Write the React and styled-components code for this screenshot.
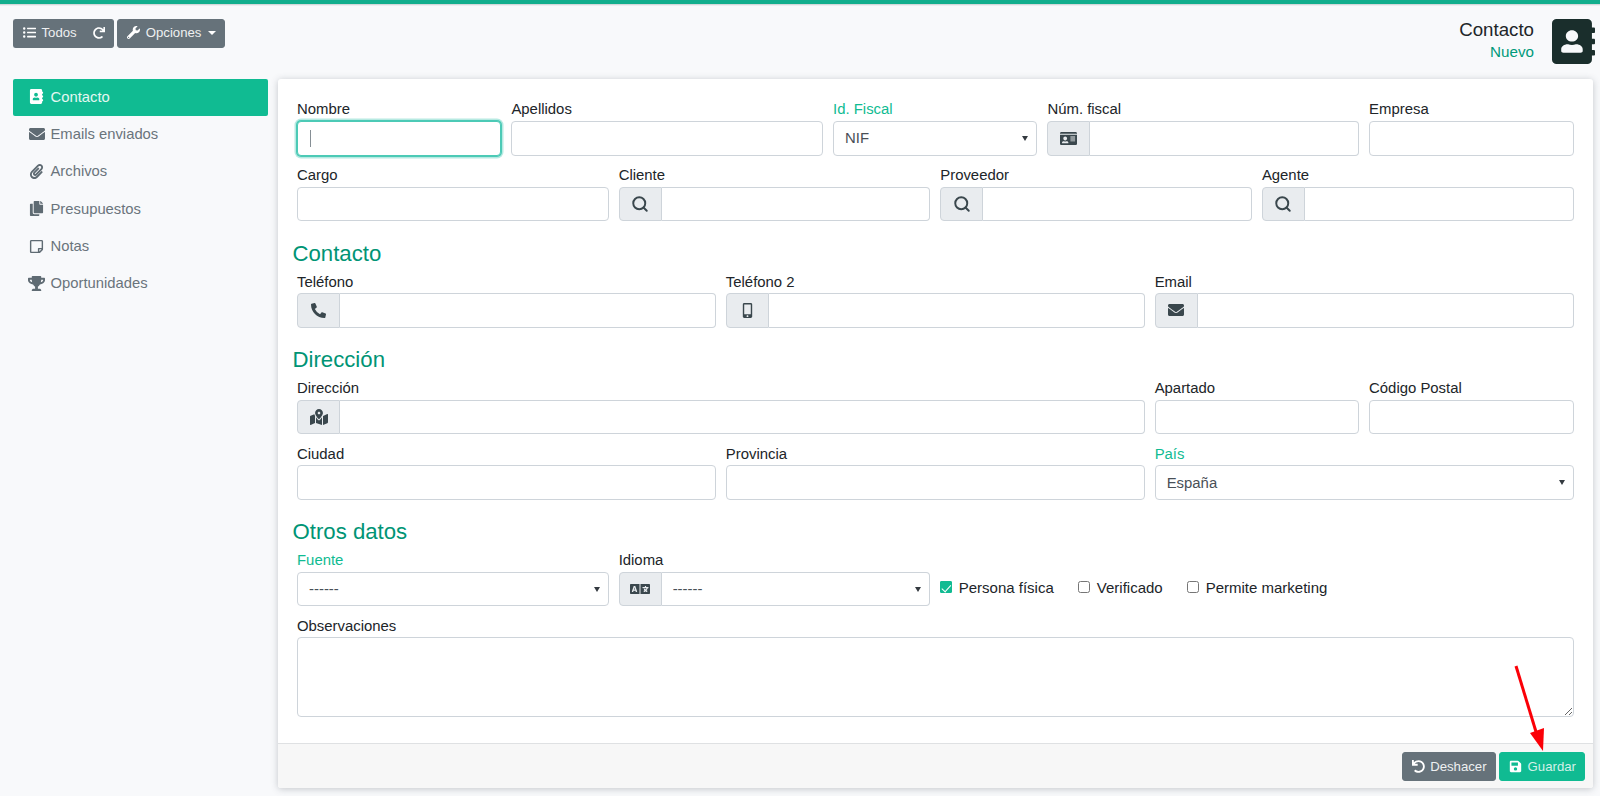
import React from "react";
import styled, { createGlobalStyle } from "styled-components";
import {
  FaListUl, FaRedo, FaWrench, FaAddressBook, FaEnvelope, FaPaperclip, FaCopy,
  FaRegStickyNote, FaTrophy, FaIdCard, FaPhoneAlt, FaMobileAlt,
  FaMapMarkedAlt, FaLanguage, FaUndo, FaSave,
} from "react-icons/fa";
import { Search } from "lucide-react";

const Global = createGlobalStyle`
  html, body { margin: 0; padding: 0; height: 100%; }
  body {
    background: #f8f9fb;
    font-family: "Liberation Sans", Arial, sans-serif;
    font-size: 14.9px;
    color: #212529;
  }
  * { box-sizing: border-box; }
`;

const Page = styled.div`
  position: relative;
  width: 1600px;
  height: 796px;
  overflow: hidden;
  border-top: 4px solid #12ae8d;
`;
const TopShadow = styled.div`
  position: absolute;
  inset: 0 0 auto 0;
  height: 2px;
  background: linear-gradient(#c9cdd0, rgba(201, 205, 208, 0));
`;
const Header = styled.header`
  display: flex;
  justify-content: space-between;
  align-items: flex-start;
  height: 75px;
  padding: 14.7px 5px 0 13px;
`;
const Toolbar = styled.div`
  display: flex;
  gap: 3.5px;
`;
const BtnGroup = styled.div`
  display: flex;
`;
const Btn = styled.button`
  display: inline-flex;
  align-items: center;
  gap: 5.5px;
  height: 29px;
  padding: 0 8px 1px 9px;
  border: 1px solid ${(p) => (p.$primary ? "#10bb92" : "#66727a")};
  border-radius: 3px;
  background: ${(p) => (p.$primary ? "#10bb92" : "#66727a")};
  color: ${(p) => (p.$primary ? "#d3f0e8" : "#eef0f1")};
  font-family: inherit;
  font-size: 13.2px;
  white-space: nowrap;
  svg { flex: none; font-size: 13px; color: #fff; }
`;
const LeftBtn = styled(Btn)`
  padding: 0 8px 1px 9px;
  border-radius: 3px 0 0 3px;
  border-right: 0;
`;
const RightBtn = styled(Btn)`
  padding: 0 8px 1px 8px;
  border-radius: 0 3px 3px 0;
  border-left: 0;
  svg { font-size: 12px; }
`;
const Caret = styled.span`
  width: 0;
  height: 0;
  margin-left: 1px;
  border-left: 4px solid transparent;
  border-right: 4px solid transparent;
  border-top: 4px solid #fff;
`;
const Title = styled.div`
  display: flex;
  gap: 18px;
  align-items: flex-start;
`;
const TitleText = styled.div`
  text-align: right;
`;
const TitleMain = styled.div`
  font-size: 18.7px;
  line-height: 22px;
  color: #212529;
`;
const TitleSub = styled.div`
  font-size: 15.2px;
  line-height: 22px;
  color: #009a7a;
`;
const BookIcon = styled(FaAddressBook)`
  display: block;
  width: 43px;
  height: 45px;
  color: #1a2e2c;
`;

const Body = styled.div`
  display: flex;
  align-items: flex-start;
  gap: 10px;
  padding: 0 7px 0 13px;
`;
const Side = styled.nav`
  flex: none;
  width: 255px;
`;
const SideItem = styled.div`
  display: flex;
  align-items: center;
  height: 37.3px;
  padding-left: 15px;
  padding-bottom: 1.5px;
  border-radius: 2px;
  background: ${(p) => (p.$active ? "#10bb92" : "transparent")};
  color: ${(p) => (p.$active ? "#e4f7f1" : "#6a747c")};
  font-size: 14.8px;
  svg { font-size: ${(p) => p.$iconSize || 15}px; color: ${(p) => (p.$active ? "#fff" : "#5f6b73")}; }
`;
const SideIcon = styled.span`
  flex: none;
  display: flex;
  justify-content: center;
  width: 17px;
  margin-right: 5.5px;
`;

const Card = styled.main`
  flex: 1;
  height: 709px;
  display: flex;
  flex-direction: column;
  background: #fff;
  border-radius: 3px;
  box-shadow: 0 1px 7px rgba(60, 70, 80, 0.28);
`;
const Form = styled.div`
  flex: 1;
  padding: 20.4px 19.5px 0 19px;
`;
const Grid = styled.div`
  display: grid;
  grid-template-columns: repeat(12, 1fr);
  column-gap: 10px;
  margin-bottom: 9.4px;
`;
const Field = styled.div`
  grid-column: span ${(p) => p.$span};
  min-width: 0;
`;
const Label = styled.label`
  display: block;
  height: 21.6px;
  line-height: 21.6px;
  font-size: 14.9px;
  color: ${(p) => (p.$required ? "#10bb92" : "#212529")};
`;
const Heading = styled.h4`
  margin: 19.4px 0 5px -4.5px;
  font-size: 22.2px;
  font-weight: 400;
  line-height: 26px;
  color: #009475;
`;
const Group = styled.div`
  position: relative;
  display: flex;
  height: 34.6px;
`;
const Prepend = styled.span`
  flex: none;
  display: flex;
  align-items: center;
  justify-content: center;
  width: 43px;
  background: #e9ecef;
  border: 1px solid #ced4da;
  border-radius: 4px 0 0 4px;
  color: #3a474d;
  font-size: ${(p) => p.$size || 15}px;
`;
const Input = styled.input`
  flex: 1;
  min-width: 0;
  width: 100%;
  height: 100%;
  padding: 0 12px;
  border: 1px solid #ced4da;
  border-left-width: ${(p) => (p.$joined ? 0 : "1px")};
  border-radius: ${(p) => (p.$joined ? "0 4px 4px 0" : "4px")};
  background: #fff;
  font: inherit;
  color: #495057;
  outline: none;
  ${(p) =>
    p.$focus &&
    "border-color: #4ccab6; box-shadow: 0 0 0 1px #4ccab6, 0 0 0 2.5px rgba(76, 202, 182, 0.4);"}
`;
const TextCaret = styled.span`
  position: absolute;
  left: 12.5px;
  top: 9px;
  width: 1.5px;
  height: 17px;
  background: #868f95;
`;
const Select = styled.select`
  flex: 1;
  min-width: 0;
  width: 100%;
  height: 100%;
  padding: 0 24px 0 11px;
  appearance: none;
  border: 1px solid #ced4da;
  border-left-width: ${(p) => (p.$joined ? 0 : "1px")};
  border-radius: ${(p) => (p.$joined ? "0 4px 4px 0" : "4px")};
  background: #fff;
  font: inherit;
  color: #495057;
`;
const SelectArrow = styled.span`
  position: absolute;
  right: 9px;
  top: 15px;
  width: 0;
  height: 0;
  border-left: 3.5px solid transparent;
  border-right: 3.5px solid transparent;
  border-top: 5px solid #343a40;
  pointer-events: none;
`;
const Checks = styled.div`
  grid-column: span 6;
  display: flex;
  align-items: center;
  align-self: end;
  gap: 24.5px;
  height: 33px;
  margin-bottom: 2.5px;
`;
const CheckLabel = styled.label`
  display: flex;
  align-items: center;
  gap: 6.5px;
  font-size: 15px;
  color: #212529;
`;
const Check = styled.input`
  position: relative;
  width: 12px;
  height: 12px;
  margin: 0;
  appearance: none;
  border: 1px solid #767676;
  border-radius: 2.5px;
  background: #fff;
  &:checked {
    border-color: #10bb92;
    border-radius: 1px;
    background: #10bb92;
  }
  &:checked::after {
    content: "";
    position: absolute;
    left: 3px;
    top: 0.5px;
    width: 4px;
    height: 7.5px;
    border: solid #fff;
    border-width: 0 1.6px 1.6px 0;
    transform: rotate(42deg);
  }
`;
const TextArea = styled.textarea`
  display: block;
  width: 100%;
  height: 79.5px;
  border: 1px solid #ced4da;
  border-radius: 4px;
  background: #fff;
  font: inherit;
`;
const Footer = styled.footer`
  flex: none;
  display: flex;
  justify-content: flex-end;
  gap: 3.5px;
  height: 45px;
  padding: 8px 8px 0 0;
  background: #f7f7f7;
  border-top: 1px solid #dfe1e3;
  border-radius: 0 0 3px 3px;
`;
const Arrow = styled.svg`
  position: absolute;
  left: 1500px;
  top: 651px;
  width: 60px;
  height: 100px;
  pointer-events: none;
`;

function Text({ span, label, required, focus }) {
  return (
    <Field $span={span}>
      <Label $required={required}>{label}</Label>
      <Group>
        <Input $focus={focus} />
        {focus && <TextCaret />}
      </Group>
    </Field>
  );
}
function Icon({ span, label, icon, size }) {
  return (
    <Field $span={span}>
      <Label>{label}</Label>
      <Group>
        <Prepend $size={size}>{icon}</Prepend>
        <Input $joined />
      </Group>
    </Field>
  );
}
function Choice({ span, label, required, value, icon, size }) {
  return (
    <Field $span={span}>
      <Label $required={required}>{label}</Label>
      <Group>
        {icon && <Prepend $size={size}>{icon}</Prepend>}
        <Select $joined={!!icon} defaultValue={value}>
          <option>{value}</option>
        </Select>
        <SelectArrow />
      </Group>
    </Field>
  );
}

const sideItems = [
  ["Contacto", <FaAddressBook />, 15],
  ["Emails enviados", <FaEnvelope />, 16],
  ["Archivos", <FaPaperclip />, 15],
  ["Presupuestos", <FaCopy />, 15],
  ["Notas", <FaRegStickyNote />, 15],
  ["Oportunidades", <FaTrophy />, 17],
];
const searchIcon = <Search size={18} strokeWidth={2.6} />;

export default function App() {
  return (
    <Page>
      <Global />
      <TopShadow />
      <Header>
        <Toolbar>
          <BtnGroup>
            <LeftBtn><FaListUl />Todos</LeftBtn>
            <RightBtn><FaRedo /></RightBtn>
          </BtnGroup>
          <Btn><FaWrench />Opciones<Caret /></Btn>
        </Toolbar>
        <Title>
          <TitleText>
            <TitleMain>Contacto</TitleMain>
            <TitleSub>Nuevo</TitleSub>
          </TitleText>
          <BookIcon preserveAspectRatio="none" />
        </Title>
      </Header>
      <Body>
        <Side>
          {sideItems.map(([name, icon, size], i) => (
            <SideItem key={name} $active={i === 0} $iconSize={size}>
              <SideIcon>{icon}</SideIcon>
              {name}
            </SideItem>
          ))}
        </Side>
        <Card>
          <Form>
            <Grid>
              <Text span={2} label="Nombre" focus />
              <Text span={3} label="Apellidos" />
              <Choice span={2} label="Id. Fiscal" required value="NIF" />
              <Icon span={3} label="Núm. fiscal" icon={<FaIdCard />} size={17} />
              <Text span={2} label="Empresa" />
            </Grid>
            <Grid>
              <Text span={3} label="Cargo" />
              <Icon span={3} label="Cliente" icon={searchIcon} />
              <Icon span={3} label="Proveedor" icon={searchIcon} />
              <Icon span={3} label="Agente" icon={searchIcon} />
            </Grid>
            <Heading>Contacto</Heading>
            <Grid>
              <Icon span={4} label="Teléfono" icon={<FaPhoneAlt />} />
              <Icon span={4} label="Teléfono 2" icon={<FaMobileAlt />} />
              <Icon span={4} label="Email" icon={<FaEnvelope />} size={16} />
            </Grid>
            <Heading>Dirección</Heading>
            <Grid>
              <Icon span={8} label="Dirección" icon={<FaMapMarkedAlt />} size={18} />
              <Text span={2} label="Apartado" />
              <Text span={2} label="Código Postal" />
            </Grid>
            <Grid>
              <Text span={4} label="Ciudad" />
              <Text span={4} label="Provincia" />
              <Choice span={4} label="País" required value="España" />
            </Grid>
            <Heading>Otros datos</Heading>
            <Grid>
              <Choice span={3} label="Fuente" required value="------" />
              <Choice span={3} label="Idioma" value="------" icon={<FaLanguage />} size={20} />
              <Checks>
                <CheckLabel><Check type="checkbox" defaultChecked />Persona física</CheckLabel>
                <CheckLabel><Check type="checkbox" />Verificado</CheckLabel>
                <CheckLabel><Check type="checkbox" />Permite marketing</CheckLabel>
              </Checks>
            </Grid>
            <Grid>
              <Field $span={12}>
                <Label>Observaciones</Label>
                <TextArea />
              </Field>
            </Grid>
          </Form>
          <Footer>
            <Btn><FaUndo />Deshacer</Btn>
            <Btn $primary><FaSave />Guardar</Btn>
          </Footer>
        </Card>
      </Body>
      <Arrow viewBox="0 0 60 100">
        <path d="M16 11 L37 80" stroke="#fb0007" strokeWidth="3" fill="none" />
        <path d="M30 78 L44 73 L43 96 Z" fill="#fb0007" />
      </Arrow>
    </Page>
  );
}
